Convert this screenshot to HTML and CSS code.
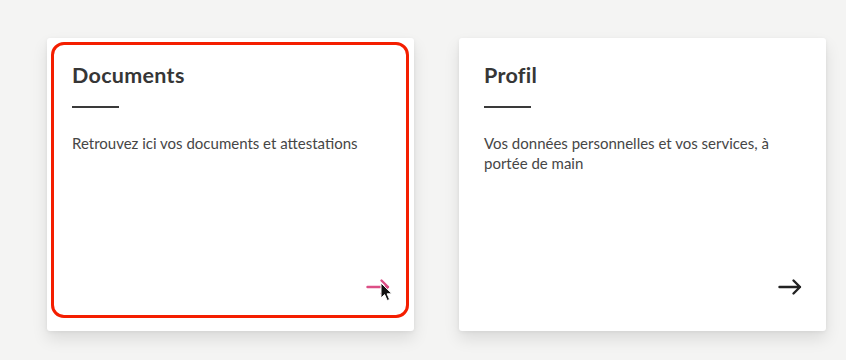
FILE: index.html
```html
<!DOCTYPE html>
<html lang="fr">
<head>
<meta charset="utf-8">
<title>Espace</title>
<link rel="stylesheet" href="styles.css">
</head>
<body>
<main class="tiles">
  <section class="card">
    <a class="link focused" href="#">
      <h2 class="title">Documents</h2>
      <span class="bar"></span>
      <p class="desc">Retrouvez ici vos documents et attestations</p>
      <svg class="arrow pink" viewBox="0 0 24 24" width="24" height="24"><path d="M1.5 12H22M15.5 5.5L22 12l-6.5 6.5" fill="none" stroke="currentColor" stroke-width="2.4" stroke-linecap="round" stroke-linejoin="round"/></svg>
      <svg class="cursor" viewBox="0 0 14 20" width="14" height="20"><path d="M1 1v15l3.6-3.4 2.6 5.9 2.4-1-2.5-5.7H12z" fill="#111" stroke="#fff" stroke-width="1"/></svg>
    </a>
  </section>
  <section class="card">
    <a class="link" href="#">
      <h2 class="title">Profil</h2>
      <span class="bar"></span>
      <p class="desc">Vos données personnelles et vos services, à portée de main</p>
      <svg class="arrow" viewBox="0 0 24 24" width="24" height="24"><path d="M1.5 12H22M15.5 5.5L22 12l-6.5 6.5" fill="none" stroke="currentColor" stroke-width="2.4" stroke-linecap="round" stroke-linejoin="round"/></svg>
    </a>
  </section>
</main>
</body>
</html>
```
FILE: styles.css
```css
html, body {
  margin: 0;
  padding: 0;
}
body {
  background: #f4f4f3;
  font-family: "Lato", "Noto Sans", sans-serif;
  color: #333;
  width: 846px;
  height: 360px;
  overflow: hidden;
}
.tiles {
  display: flex;
  gap: 45px;
  padding: 38px 0 0 47px;
}
.card {
  width: 367px;
  height: 293px;
  box-sizing: border-box;
  background: #fff;
  border-radius: 3px;
  box-shadow: 0 8px 16px rgba(0, 0, 0, 0.1), 0 1px 4px rgba(0, 0, 0, 0.06);
  padding: 4px 5px 13px 4px;
}
.link {
  position: relative;
  box-sizing: border-box;
  height: 100%;
  display: flex;
  flex-direction: column;
  border: 3px solid transparent;
  border-radius: 13px;
  padding: 18px 16px 16px 18px;
  text-decoration: none;
  color: inherit;
}
.link.focused {
  border-color: #f41e00;
}
.title {
  margin: 0;
  font-size: 21.5px;
  line-height: 24px;
  font-weight: 700;
  letter-spacing: 0.3px;
  color: #363636;
}
.bar {
  display: block;
  width: 47px;
  height: 2px;
  background: #3a3a3a;
  margin-top: 19px;
}
.desc {
  margin: 25px 0 0;
  font-size: 15px;
  line-height: 20px;
  color: #464646;
  padding-right: 20px;
}
.arrow {
  margin-top: auto;
  align-self: flex-end;
  color: #222;
  display: block;
}
.arrow.pink {
  color: #dc4f86;
}
.cursor {
  position: absolute;
  right: 12px;
  bottom: 13px;
}
```
